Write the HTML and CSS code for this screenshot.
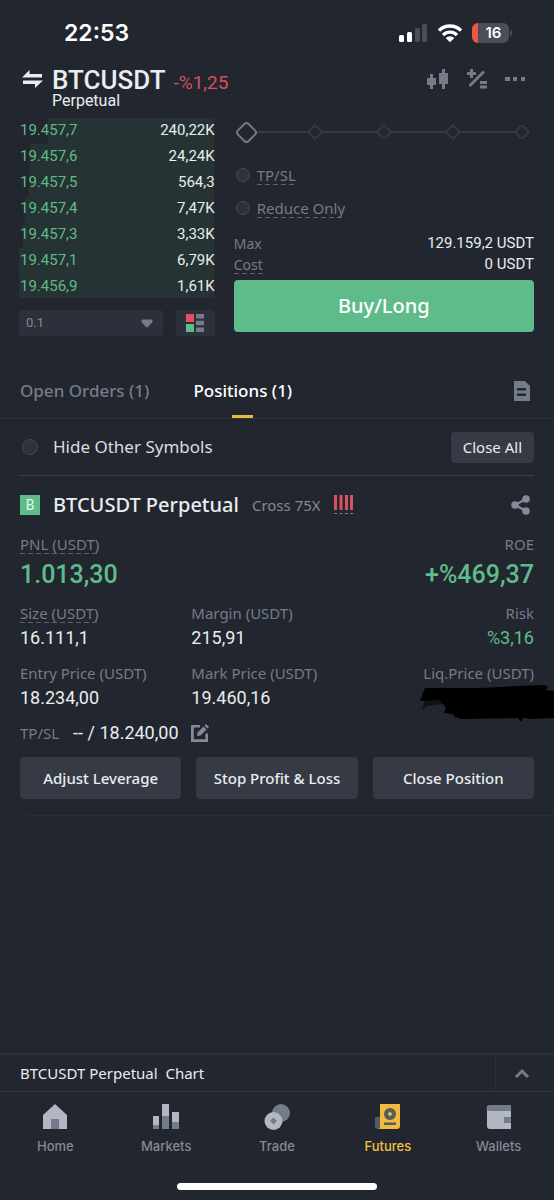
FILE: index.html
```html
<!DOCTYPE html>
<html lang="en">
<head>
<meta charset="utf-8">
<meta name="viewport" content="width=device-width, initial-scale=1">
<title>BTCUSDT Perpetual</title>
<link rel="stylesheet" href="styles.css">
</head>
<body>
<div class="status">
  <span class="clock">22:53</span>
  <div class="status-icons">
    <svg width="30" height="20" viewBox="0 0 30 20" aria-hidden="true">
      <g fill="#fff"><rect x="1" y="12" width="5" height="7" rx="1.5"/><rect x="9" y="9" width="5" height="10" rx="1.5"/></g>
      <g fill="#4b4e56"><rect x="17" y="5" width="5" height="14" rx="1.5"/><rect x="24" y="1" width="5" height="18" rx="1.5"/></g>
    </svg>
    <svg width="26" height="20" viewBox="0 0 26 20" aria-hidden="true">
      <g fill="none" stroke="#fff" stroke-width="3.4"><path d="M2 7.6a15.6 15.6 0 0 1 22 0"/><path d="M6 12a10 10 0 0 1 14 0"/></g>
      <path d="M8.7 14.9a6.2 6.2 0 0 1 8.6 0L13 19.2z" fill="#fff"/>
    </svg>
    <span class="battery"><span class="battery-body">16</span><span class="battery-tip"></span></span>
  </div>
</div>

<header class="header">
  <button class="icon-btn swap" aria-label="Switch symbol">
    <svg width="22" height="20" viewBox="0 0 22 20" fill="#eaecef"><path d="M0 8.600 7.500 1v4H20v3.600zM21 11.400 13 19v-4H1v-3.600z"/></svg>
  </button>
  <div class="pair">
    <div class="pair-line"><h1>BTCUSDT</h1><span class="change">-%1,25</span></div>
    <span class="kind">Perpetual</span>
  </div>
  <div class="tools">
    <button class="icon-btn" aria-label="Candles">
      <svg width="23" height="22" viewBox="0 0 23 22" fill="#767b8a"><path d="M4 6h3v4h3v7H7v4H4v-4H1v-7h3zM16 1h3v4h3v11h-3v5h-3v-5h-3V5h3z"/></svg>
    </button>
    <button class="icon-btn" aria-label="Calculator">
      <svg width="22" height="22" viewBox="0 0 22 22" fill="#767b8a"><path d="M4 1h3v3h3v3H7v3H4V7H1V4h3zM14 13h7v3h-7zM14 17.500h7v3h-7z"/><path d="M3.500 18 18 3.500" stroke="#767b8a" stroke-width="2.800"/></svg>
    </button>
    <button class="icon-btn" aria-label="More">
      <svg width="21" height="22" viewBox="0 0 21 22" fill="#767b8a"><path d="M0 9h5v4H0zM8 9h4v4H8zM16 9h4v4h-4z"/></svg>
    </button>
  </div>
</header>

<main>
<section class="trade">
  <div class="book">
    <table class="orders">
      <tbody>
        <tr class="fill-1"><td>19.457,7</td><td>240,22K</td></tr>
        <tr class="fill-2"><td>19.457,6</td><td>24,24K</td></tr>
        <tr class="fill-3"><td>19.457,5</td><td>564,3</td></tr>
        <tr class="fill-4"><td>19.457,4</td><td>7,47K</td></tr>
        <tr class="fill-5"><td>19.457,3</td><td>3,33K</td></tr>
        <tr class="fill-6"><td>19.457,1</td><td>6,79K</td></tr>
        <tr class="fill-6"><td>19.456,9</td><td>1,61K</td></tr>
      </tbody>
    </table>
    <div class="book-tools">
      <div class="step">
        <select aria-label="Price step"><option>0.1</option></select>
        <svg width="12" height="9" viewBox="0 0 12 9" aria-hidden="true"><path d="M1 1h10v2.200L6.500 8h-1L1 3.200z" fill="#767b8a" stroke="#767b8a" stroke-linejoin="round"/></svg>
      </div>
      <button class="depth" aria-label="Book layout">
        <svg width="18" height="18" viewBox="0 0 18 18"><path d="M0 0h8v8H0z" fill="#e4505f"/><path d="M0 10h8v8H0z" fill="#5fbc8a"/><path d="M10 0h8v4.500h-8zM10 6.800h8v4.500h-8zM10 13.500h8V18h-8z" fill="#767b8a"/></svg>
      </button>
    </div>
  </div>

  <div class="form">
    <div class="slider">
      <div class="marks"><i></i><i></i><i></i><i></i><i></i></div>
      <input type="range" min="0" max="100" value="0" aria-label="Amount">
    </div>
    <label class="check"><input type="checkbox"><span class="hint">TP/SL</span></label>
    <label class="check"><input type="checkbox"><span class="hint">Reduce Only</span></label>
    <dl class="limits">
      <div><dt>Max</dt><dd>129.159,2 USDT</dd></div>
      <div><dt><span class="hint">Cost</span></dt><dd>0 USDT</dd></div>
    </dl>
    <button class="buy">Buy/Long</button>
  </div>
</section>

<nav class="tabs">
  <button class="tab">Open Orders (1)</button>
  <button class="tab active">Positions (1)</button>
  <button class="icon-btn history" aria-label="Order history">
    <svg width="16" height="20" viewBox="0 0 16 20"><path d="M0 0h11l5 5v15H0z" fill="#767b8a"/><path d="M3 7h9v2.600H3zM3 12.500h9v2.600H3z" fill="#22262f"/></svg>
  </button>
</nav>

<section class="positions">
  <div class="filter">
    <label class="check large"><input type="checkbox"><span>Hide Other Symbols</span></label>
    <button class="close-all">Close All</button>
  </div>

  <article class="position">
    <div class="position-head">
      <span class="side">B</span>
      <h2>BTCUSDT Perpetual</h2>
      <span class="leverage">Cross 75X</span>
      <svg width="20" height="20" viewBox="0 0 20 20" aria-hidden="true"><path d="M0 0h3v15H0zM5.500 0h3v15h-3zM11 0h3v15h-3zM16 0h3v15h-3z" fill="#d9505e"/><path d="M0 18.500h20" stroke="#767b8a" stroke-dasharray="3 2.400"/></svg>
      <button class="icon-btn share" aria-label="Share">
        <svg width="20" height="20" viewBox="0 0 20 20" fill="#848a98"><path d="M15 4 4 10l11 6" fill="none" stroke="#848a98" stroke-width="2.400"/><circle cx="15" cy="4" r="3.800"/><circle cx="4" cy="10" r="3.800"/><circle cx="15" cy="16" r="3.800"/></svg>
      </button>
    </div>

    <dl class="result">
      <div><dt><span class="hint">PNL (USDT)</span></dt><dd>1.013,30</dd></div>
      <div><dt>ROE</dt><dd>+%469,37</dd></div>
    </dl>
    <dl class="stats">
      <div><dt><span class="hint">Size (USDT)</span></dt><dd>16.111,1</dd></div>
      <div><dt>Margin (USDT)</dt><dd>215,91</dd></div>
      <div><dt>Risk</dt><dd class="good">%3,16</dd></div>
      <div><dt>Entry Price (USDT)</dt><dd>18.234,00</dd></div>
      <div><dt>Mark Price (USDT)</dt><dd>19.460,16</dd></div>
      <div><dt>Liq.Price (USDT)</dt><dd class="hidden-price">
        <svg width="134" height="36" viewBox="0 0 134 36" aria-hidden="true"><path d="M5 14 2 25l5-4 16-2 4-6z" fill="#101217"/><path d="M5 3 60 3l60-3 8 1-2 4 8 1v27l-22 1-9-1-2 4-3-4-57 1-6-2-2-3-9-1 2-5-6-8L0 16z" fill="#000"/></svg>
      </dd></div>
    </dl>
    <div class="stops">
      <span class="stops-label">TP/SL</span><span class="stops-value">-- / 18.240,00</span>
      <button class="icon-btn" aria-label="Edit TP/SL">
        <svg width="18" height="18" viewBox="0 0 18 18" fill="#848a98"><path d="M0 1h9v2.600H2.800v11.600h11.600V9.500H17V18H0z"/><path d="m6 12 .5-3.500 6-6 3 3-6 6zM13.500 1.500 15 0l3 3-1.500 1.500z"/></svg>
      </button>
    </div>
    <div class="actions">
      <button>Adjust Leverage</button>
      <button>Stop Profit &amp; Loss</button>
      <button>Close Position</button>
    </div>
  </article>
</section>
</main>

<footer class="footer">
  <div class="chart-bar">
    <span>BTCUSDT Perpetual&nbsp; Chart</span>
    <button aria-label="Expand chart"><svg width="16" height="11" viewBox="0 0 16 11"><path d="m2 9 6-6 6 6" fill="none" stroke="#767b8a" stroke-width="3"/></svg></button>
  </div>
  <nav class="bottom-nav">
    <a href="#home"><svg width="26" height="26" viewBox="0 0 26 26"><path d="M13 0 25 11v14H1V11z" fill="#b2b7c3"/><path d="M9 15h8v10H9z" fill="#747b8a"/></svg>Home</a>
    <a href="#markets"><svg width="28" height="26" viewBox="0 0 28 26"><path d="M1 12h6v13H1zM10 0h7v25h-7zM20 8h7v17h-7z" fill="#b2b7c3"/><path d="M1 21h6v4H1zM10 12h7v13h-7zM20 18h7v7h-7z" fill="#747b8a"/></svg>Markets</a>
    <a href="#trade"><svg width="26" height="26" viewBox="0 0 26 26"><circle cx="17" cy="9" r="9" fill="#747b8a"/><circle cx="9.500" cy="17" r="9" fill="#b2b7c3"/><path d="m9.500 13.500 3.500 3.500-3.500 3.500L6 17z" fill="#747b8a"/></svg>Trade</a>
    <a href="#futures" class="current"><svg width="26" height="26" viewBox="0 0 26 26"><path d="M0 13h6v12H3a3 3 0 0 1-3-3z" fill="#555a65"/><path d="M5 0h20v22a3 3 0 0 1-3 3H4q1-1 1-3z" fill="#f0bb3e"/><circle cx="15" cy="10" r="6" fill="#555a65"/><path d="m15 7.500 2.500 2.500-2.500 2.500-2.500-2.500z" fill="#f0bb3e"/><path d="M9 18.500h12V21H9z" fill="#555a65"/></svg>Futures</a>
    <a href="#wallets"><svg width="26" height="26" viewBox="0 0 26 26"><path d="M1 4h24v21H4a3 3 0 0 1-3-3z" fill="#b2b7c3"/><path d="M4 1h21v6H3a3 3 0 0 1 1-6zM18 13h7v6h-7z" fill="#747b8a"/></svg>Wallets</a>
  </nav>
  <div class="home-bar"></div>
</footer>
</body>
</html>
```
FILE: styles.css
```css
* { box-sizing: border-box; }

:root {
  --bg: #22262f;
  --panel: #353a45;
  --line: #2d323c;
  --muted: #767b88;
  --text: #eaecef;
  --green: #5fbc8a;
  --num: Roboto, "Liberation Sans", sans-serif;
}

body {
  margin: 0;
  min-height: 100vh;
  display: flex;
  flex-direction: column;
  background: var(--bg);
  color: var(--text);
  font: 15px/20px "Noto Sans", "Liberation Sans", sans-serif;
}

h1, h2, dl, dd { margin: 0; }
button, select, input { font: inherit; color: inherit; margin: 0; }
button { border: 0; padding: 0; background: none; }
svg { display: block; flex: none; }
.icon-btn { display: block; }

.hint {
  background: repeating-linear-gradient(90deg, #5c616d 0 5px, transparent 5px 8px) bottom / 100% 1px no-repeat;
}

/* Status bar */
.status {
  display: flex;
  justify-content: space-between;
  align-items: center;
  height: 66px;
  padding: 0 42px 0 64px;
}
.clock { font: 600 23px/28px Inter, sans-serif; color: #fff; }
.status-icons { display: flex; align-items: center; gap: 9px; }
.battery { display: flex; align-items: center; gap: 1px; }
.battery-body {
  width: 37px;
  border-radius: 6px;
  padding-left: 6px;
  background: linear-gradient(90deg, #ee5547 6px, #4b4e56 6px);
  color: #fff;
  font: 600 15px/20px Inter, sans-serif;
  text-align: center;
}
.battery-tip { width: 2px; height: 6px; background: #4b4e56; border-radius: 0 2px 2px 0; }

/* Symbol header */
.header {
  display: flex;
  height: 52px;
  padding: 0 28px 0 22px;
}
.swap { align-self: flex-start; margin-top: 3px; }
.pair { margin-left: 8px; padding-top: 1px; flex: 1; }
.pair-line { display: flex; align-items: baseline; gap: 8px; }
.pair h1 { font: 500 26px/26px Roboto, sans-serif; }
.change { font: 19px/20px var(--num); color: #d74f5e; }
.kind { display: block; font: 16px/16px Roboto, sans-serif; }
.tools { display: flex; align-items: flex-start; gap: 17px; padding-top: 2px; }

/* Order book and order form */
.trade { display: flex; gap: 19px; padding: 0 20px 0 19px; }
.book { width: 38%; flex: none; }
.orders { width: 100%; border-collapse: collapse; font: 15px/24px var(--num); }
.orders td { padding: 0 0 0 1px; height: 26px; line-height: 24px; vertical-align: top; }
.orders tr:last-child td { height: 24px; }
.orders td:first-child { color: var(--green); }
.orders td:last-child { text-align: right; }
.orders tr { background: linear-gradient(#263334, #263334) right / 100% 100% no-repeat; }
.orders .fill-1 { background-size: 85% 100%; }
.orders .fill-2 { background-size: 94% 100%; }
.orders .fill-3 { background-size: 95% 100%; }
.orders .fill-4 { background-size: 97% 100%; }
.orders .fill-5 { background-size: 98% 100%; }

.book-tools { display: flex; gap: 13px; margin-top: 12px; }
.step {
  flex: 1;
  display: flex;
  align-items: center;
  padding-right: 10px;
  background: #2b303b;
  border-radius: 3px;
}
.step select {
  appearance: none;
  flex: 1;
  min-width: 0;
  height: 26px;
  padding: 0 7px;
  border: 0;
  background: none;
  color: #848995;
  font: 13px/26px var(--num);
}
.depth { display: grid; place-items: center; width: 39px; background: #2b303b; border-radius: 3px; }

.form { flex: 1; min-width: 0; }
.slider { position: relative; margin: 2px 6px 0; height: 24px; }
.marks {
  height: 24px;
  display: flex;
  align-items: center;
  justify-content: space-between;
  background: linear-gradient(#343943, #343943) center / 100% 2px no-repeat;
}
.marks i { width: 12px; height: 12px; transform: rotate(45deg); border: 2px solid #343943; border-radius: 3px; background: var(--bg); }
.marks i:first-child { visibility: hidden; }
.slider input {
  appearance: none;
  position: absolute;
  inset: 0 -2px;
  height: 24px;
  background: none;
}
.slider input::-webkit-slider-thumb {
  appearance: none;
  width: 17px;
  height: 17px;
  transform: rotate(45deg);
  border: 2px solid #747986;
  border-radius: 4px;
  background: var(--bg);
}

.check { display: flex; align-items: center; gap: 7px; color: var(--muted); height: 22px; }
.form .check { margin: 0 2px 11px; }
.slider + .check { margin-top: 20px; }
.check input {
  appearance: none;
  width: 14px;
  height: 14px;
  border: 1px solid #454a57;
  border-radius: 50%;
  background: #2d3240;
}
.limits { color: var(--muted); font-size: 14px; }
.limits div { display: flex; justify-content: space-between; line-height: 21px; }
.form .limits { margin-top: 14px; }
.limits dd { color: var(--text); font: 15px/21px var(--num); }
.buy {
  display: block;
  width: 100%;
  height: 52px;
  margin-top: 5px;
  border-radius: 4px;
  background: var(--green);
  color: #fff;
  font-size: 20px;
  font-weight: 500;
}

/* Tabs */
.tabs {
  display: flex;
  align-items: stretch;
  gap: 44px;
  height: 55px;
  margin-top: 28px;
  padding: 0 24px 0 20px;
  border-bottom: 1px solid #2c303a;
}
.tab { font-size: 17px; font-weight: 500; color: var(--muted); }
.tab.active {
  color: #fff;
  background: linear-gradient(#e7b93f, #e7b93f) bottom / 21px 3px no-repeat;
}
.history { margin-left: auto; }

/* Positions */
.positions { padding: 0 20px; }
.filter {
  display: flex;
  align-items: center;
  justify-content: space-between;
  height: 57px;
  border-bottom: 1px solid #3a3f4a;
}
.check.large { gap: 15px; padding-left: 2px; font-size: 17px; color: #d9dce2; }
.check.large input { width: 16px; height: 16px; }
.close-all { padding: 0 12px; height: 31px; border-radius: 4px; background: var(--panel); font-size: 15px; }

.position-head { display: flex; align-items: center; gap: 13px; height: 58px; }
.side {
  width: 20px;
  background: var(--green);
  color: #e3f5ea;
  font: 14px/20px Roboto, sans-serif;
  text-align: center;
}
.position-head h2 { font-size: 20px; font-weight: 500; }
.leverage { color: #848995; font-size: 15px; }
.share { margin-left: auto; margin-right: 3px; }

dt { color: var(--muted); }
.result { display: flex; justify-content: space-between; }
.result dd { font: 500 25px/30px var(--num); color: var(--green); margin: 6px 0 13px; }
.result div:last-child { text-align: right; }
.stats { display: grid; grid-template-columns: 1fr 1fr 1fr; row-gap: 10px; }
.stats div { min-width: 0; white-space: nowrap; }
.stats div:nth-child(3n) { text-align: right; }
.stats dd { font: 18px/24px var(--num); height: 30px; padding-top: 3px; }
.stats .good { color: var(--green); }
.stats .hidden-price { position: relative; }
.hidden-price svg { position: absolute; right: -20px; top: 2px; }

.stops { display: flex; align-items: center; height: 40px; }
.stops-label { color: var(--muted); margin-right: 14px; }
.stops-value { font: 18px/24px var(--num); margin-right: 12px; }
.actions { display: grid; grid-template-columns: 1fr 1fr 1fr; gap: 15px; margin-top: 4px; }
.actions button { height: 42px; border-radius: 4px; background: var(--panel); font-size: 15px; font-weight: 500; white-space: nowrap; }
.position { position: relative; padding-bottom: 17px; }
.position::after { content: ""; position: absolute; left: 6px; right: -20px; bottom: 0; height: 1px; background: #2a2e38; }

/* Bottom chart bar and navigation */
.footer { margin-top: auto; }
.chart-bar {
  display: flex;
  height: 39px;
  padding-left: 20px;
  border-top: 2px solid var(--line);
  border-bottom: 1px solid var(--line);
  align-items: center;
  justify-content: space-between;
}
.chart-bar button { width: 59px; height: 36px; display: grid; place-items: center; border-left: 1px solid #2a2e38; padding-right: 6px; }
.bottom-nav { display: grid; grid-template-columns: repeat(5, 1fr); padding-top: 12px; }
.bottom-nav a {
  display: flex;
  flex-direction: column;
  align-items: center;
  gap: 7px;
  color: #848995;
  font: 500 13px/18px Inter, sans-serif;
  text-decoration: none;
}
.bottom-nav .current { color: #f0c13e; }
.home-bar { width: 36%; height: 7px; margin: 28px auto 10px; border-radius: 4px; background: #fff; }
```
